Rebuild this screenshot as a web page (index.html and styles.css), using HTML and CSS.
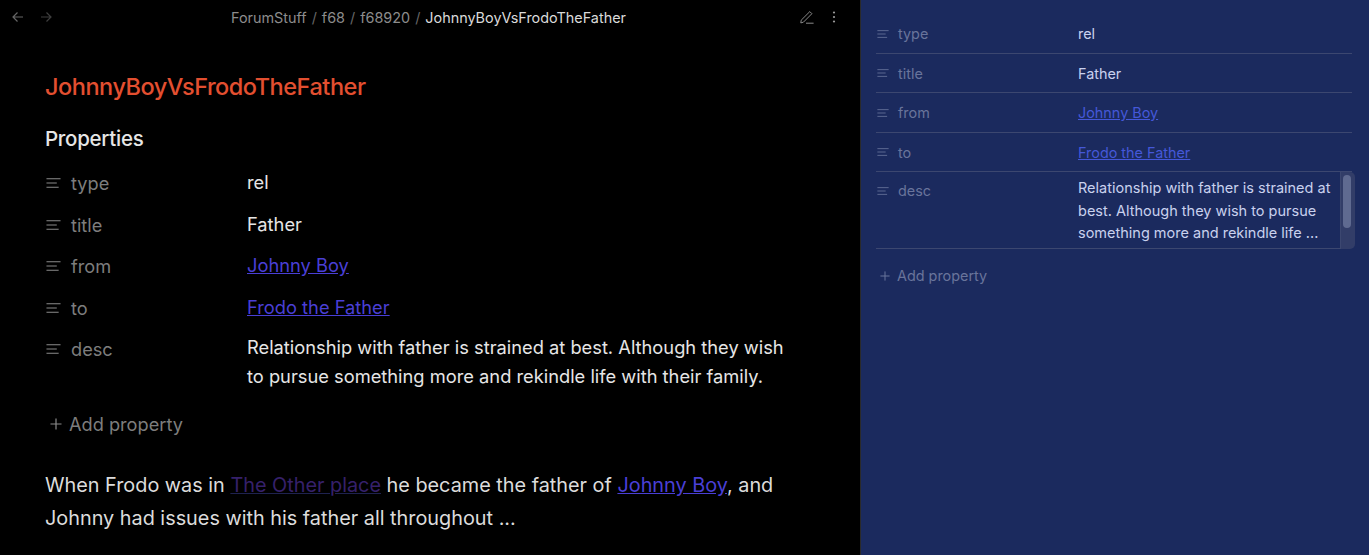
FILE: index.html
```html
<!DOCTYPE html>
<html lang="en">
<head>
<meta charset="utf-8">
<title>JohnnyBoyVsFrodoTheFather</title>
<link rel="stylesheet" href="styles.css">
</head>
<body>
<svg class="defs" width="0" height="0" aria-hidden="true">
  <symbol id="lines" viewBox="0 0 16 12"><path d="M0.5 1.5H15.5M0.5 6H11.5M0.5 10.5H13.5" fill="none" stroke="currentColor" stroke-width="1.1"/></symbol>
  <symbol id="plus" viewBox="0 0 12 12"><path d="M6 0.5V11.5M0.5 6H11.5" fill="none" stroke="currentColor" stroke-width="1.2"/></symbol>
</svg>
<main class="app">
  <section class="note">
    <header class="bar">
      <div class="nav">
        <svg class="nav-icon" viewBox="0 0 12 12"><path d="M11 6H1M5.5 1.5L1 6L5.5 10.5" fill="none" stroke="currentColor" stroke-width="1.2"/></svg>
        <svg class="nav-icon dim" viewBox="0 0 12 12"><path d="M1 6H11M6.5 1.5L11 6L6.5 10.5" fill="none" stroke="currentColor" stroke-width="1.2"/></svg>
      </div>
      <div class="crumbs"><span>ForumStuff</span><i>/</i><span>f68</span><i>/</i><span>f68920</span><i>/</i><b>JohnnyBoyVsFrodoTheFather</b></div>
      <div class="actions">
        <svg class="edit" viewBox="0 0 14 14"><path d="M1.2 10.2L9.8 1.6L11.9 3.7L3.4 12.2L0.8 12.9ZM6 13.2H13.6" fill="none" stroke="currentColor" stroke-width="1"/></svg>
        <svg class="more" viewBox="0 0 4 12"><circle cx="2" cy="1.5" r="1.1"/><circle cx="2" cy="6" r="1.1"/><circle cx="2" cy="10.5" r="1.1"/></svg>
      </div>
    </header>
    <div class="content">
      <h1>JohnnyBoyVsFrodoTheFather</h1>
      <h2>Properties</h2>
      <div class="props">
        <div class="prop"><div class="key"><svg class="lines"><use href="#lines"/></svg>type</div><div class="val">rel</div></div>
        <div class="prop"><div class="key"><svg class="lines"><use href="#lines"/></svg>title</div><div class="val">Father</div></div>
        <div class="prop"><div class="key"><svg class="lines"><use href="#lines"/></svg>from</div><div class="val"><a href="#">Johnny Boy</a></div></div>
        <div class="prop"><div class="key"><svg class="lines"><use href="#lines"/></svg>to</div><div class="val"><a href="#">Frodo the Father</a></div></div>
        <div class="prop"><div class="key"><svg class="lines"><use href="#lines"/></svg>desc</div><div class="val long">Relationship with father is strained at best. Although they wish to pursue something more and rekindle life with their family.</div></div>
      </div>
      <div class="add"><svg class="plus"><use href="#plus"/></svg>Add property</div>
      <p class="body">When Frodo was in <a class="unresolved" href="#">The Other place</a> he became the father of <a href="#">Johnny Boy</a>, and Johnny had issues with his father all throughout ...</p>
    </div>
  </section>
  <aside class="side">
    <div class="sprops">
      <div class="sprop"><div class="skey"><svg class="slines"><use href="#lines"/></svg>type</div><div class="sval">rel</div></div>
      <div class="sprop"><div class="skey"><svg class="slines"><use href="#lines"/></svg>title</div><div class="sval">Father</div></div>
      <div class="sprop"><div class="skey"><svg class="slines"><use href="#lines"/></svg>from</div><div class="sval"><a href="#">Johnny Boy</a></div></div>
      <div class="sprop"><div class="skey"><svg class="slines"><use href="#lines"/></svg>to</div><div class="sval"><a href="#">Frodo the Father</a></div></div>
      <div class="sprop sdesc">
        <div class="skey"><svg class="slines"><use href="#lines"/></svg>desc</div>
        <div class="sval slong">Relationship with father is strained at best. Although they wish to pursue something more and rekindle life ...</div>
        <div class="track"><div class="thumb"></div></div>
      </div>
    </div>
    <div class="sadd"><svg class="splus"><use href="#plus"/></svg>Add property</div>
  </aside>
</main>
</body>
</html>
```
FILE: styles.css
```css
* { box-sizing: border-box; }
html, body { margin: 0; height: 100%; }
body { font-family: Inter, "Liberation Sans", sans-serif; background: #000; overflow: hidden; }
.defs { position: absolute; }
.app { display: flex; height: 555px; }

.note { width: 861px; background: #000; border-right: 1px solid #2a2a2a; flex: none; }
.bar { display: flex; align-items: center; height: 34px; padding: 0 24px 0 12px; position: relative; }
.nav { display: flex; gap: 16px; color: #666; }
.nav-icon { width: 12px; height: 12px; display: block; }
.nav-icon.dim { color: #3f3f3f; }
.crumbs { flex: 1; display: flex; justify-content: center; align-items: center; padding-left: 5px; font-size: 14.4px; color: #8c8c8c; }
.crumbs i { font-style: normal; margin: 0 5px; color: #666; }
.crumbs b { font-weight: 400; color: #dadada; }
.actions { display: flex; align-items: center; gap: 18px; color: #8a8a8a; }
.edit { width: 14px; height: 14px; display: block; }
.more { width: 4px; height: 12px; display: block; fill: #9a9a9a; }

.content { padding: 0 0 0 45px; }
h1 { margin: 34px 0 0; font-size: 23.5px; line-height: 38px; font-weight: 550; color: #e34f30; letter-spacing: -0.02em; }
h2 { margin: 19px 0 0; font-size: 20.5px; line-height: 28px; font-weight: 550; color: #e6e6e6; letter-spacing: -0.014em; }
.props { margin-top: 10px; }
.prop { display: grid; grid-template-columns: 202px 1fr; min-height: 41.5px; align-items: start; padding-top: 7px; }
.key { display: flex; align-items: center; font-size: 18.2px; line-height: 26px; color: #7d7d7d; }
.lines { width: 15px; height: 12px; margin: 0 10px 0 1px; color: #8a8a8a; }
.val { font-size: 18.3px; line-height: 26px; margin-top: -1px; color: #e6e6e6; }
.long { line-height: 29px; margin-top: -3.5px; width: 545px; }
.val a, .body a { color: #4a3fd6; }
.add { display: flex; align-items: center; margin: 20.5px 0 0 5px; font-size: 18.2px; line-height: 26px; color: #7d7d7d; }
.plus { width: 12px; height: 12px; margin-right: 7px; color: #8a8a8a; }
.body { margin: 32px 0 0; width: 760px; font-size: 19.84px; line-height: 33px; color: #dcdcdc; }
.body a.unresolved { color: #36206b; text-decoration-color: #1f2250; }

.side { flex: 1; background: #1b2a5e; padding: 14px 14px 0 15px; }
.sprops { width: 479px; }
.sprop { display: grid; grid-template-columns: 202px 1fr; height: 40px; align-items: center; border-bottom: 1px solid #3c4770; width: 476px; }
.sprop:nth-child(even) { height: 39px; }
.skey { display: flex; align-items: center; font-size: 14.4px; color: #69749b; }
.slines { width: 12px; height: 10px; margin: 0 9px 0 1px; color: #69749b; }
.sval { font-size: 14.4px; color: #c9d1ee; font-weight: 400; }
.sval a { color: #4558d8; font-weight: 400; }
.sdesc { position: relative; height: 77px; align-items: start; width: 479px; border-bottom: none; }
.sdesc::after { content: ""; position: absolute; left: 0; bottom: 0; width: 465px; height: 1px; background: #3c4770; }
.sdesc .skey { padding-top: 10px; }
.slong { line-height: 22.5px; padding-top: 5px; font-size: 14.5px; width: 263px; }
.track { position: absolute; right: 0; top: 0; width: 15px; height: 77px; background: #323d68; border-left: 1px solid #3c4770; border-radius: 0 5px 5px 0; padding: 3px 2px; }
.thumb { width: 8px; height: 53px; border-radius: 4px; background: #5f6a90; }
.sadd { display: flex; align-items: center; margin: 18px 0 0 4px; font-size: 14.4px; color: #69749b; }
.splus { width: 10px; height: 10px; margin-right: 7px; color: #69749b; }
```
